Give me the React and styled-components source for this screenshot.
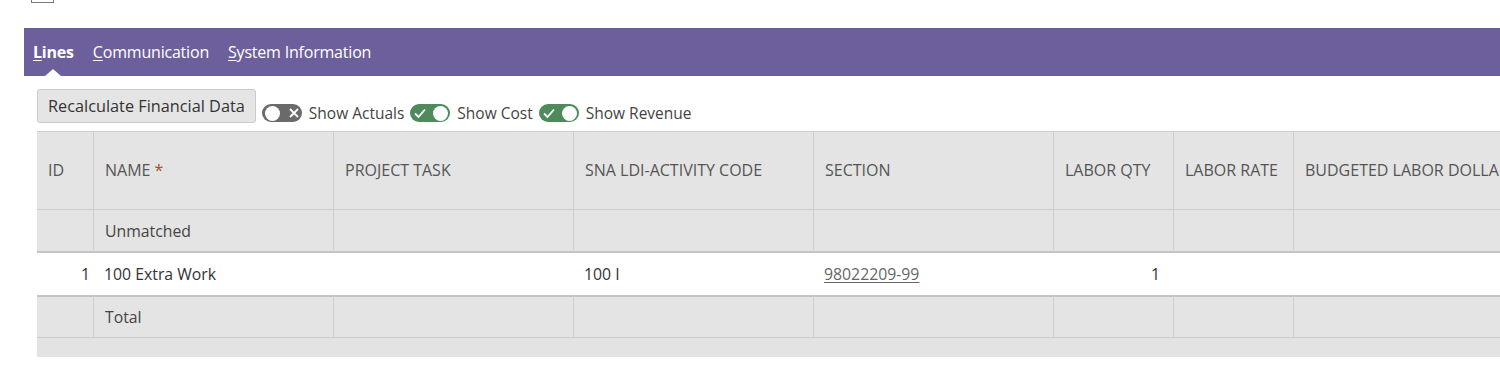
import React from 'react';
import styled, { createGlobalStyle } from 'styled-components';

const Global = createGlobalStyle`
  body {
    margin: 0;
    background: #fff;
    font-family: "Open Sans", "Liberation Sans", sans-serif;
    overflow: hidden;
  }
`;

const Page = styled.div`
  padding-left: 24px;
  width: 1500px;
  box-sizing: border-box;
  overflow: hidden;
`;

const TopCheck = styled.div`
  margin-left: 7px;
  width: 21px;
  height: 2px;
  border: 1px solid #7a7a7a;
  border-top: none;
`;

const TabBar = styled.div`
  margin-top: 25px;
  height: 48px;
  background: #6d5f9b;
  display: flex;
  align-items: center;
  gap: 19px;
  padding-left: 9px;
`;

const Tab = styled.div`
  position: relative;
  color: #fff;
  font-size: 16px;
  font-weight: ${p => (p.$active ? 700 : 400)};
  letter-spacing: -0.2px;
  height: 48px;
  line-height: 48px;

  u { text-decoration: underline; text-underline-offset: 2px; }

  ${p => p.$active && `
    &::after {
      content: '';
      position: absolute;
      left: 50%;
      bottom: 0;
      transform: translateX(-50%);
      border-left: 8px solid transparent;
      border-right: 8px solid transparent;
      border-bottom: 7px solid #fff;
    }
  `}
`;

const Body = styled.div`
  padding: 13px 0 0 13px;
`;

const Toolbar = styled.div`
  display: flex;
  align-items: flex-end;
  gap: 6px;
`;

const Button = styled.button`
  font-family: inherit;
  font-size: 16.3px;
  color: #333;
  background: #e5e5e5;
  border: 1px solid #cbcbcb;
  border-radius: 3px;
  height: 34px;
  padding: 0 10px;
`;

const ToggleItem = styled.label`
  display: flex;
  align-items: center;
  gap: 7px;
  font-size: 15.5px;
  color: #444;
  height: 20px;
`;

const Switch = styled.span`
  width: 40px;
  height: 18px;
  border-radius: 9px;
  background: ${p => (p.$on ? '#4e8a5c' : '#6a6a6a')};
  display: flex;
  align-items: center;
  justify-content: space-between;
  flex-direction: ${p => (p.$on ? 'row' : 'row-reverse')};
  padding: 0 2px 0 3px;
  box-sizing: border-box;
`;

const Knob = styled.span`
  width: 15px;
  height: 15px;
  border-radius: 50%;
  background: #fff;
`;

const Table = styled.div`
  margin-top: 8px;
  width: 1700px;
  display: grid;
  grid-template-columns: 56px 240px 240px 240px 240px 120px 120px 484px;
  font-size: 15.8px;
  color: #444;
`;

const HeadCell = styled.div`
  background: #e4e4e4;
  height: 79px;
  box-sizing: border-box;
  border-top: 1px solid #cdcdcd;
  border-left: ${p => (p.$first ? 'none' : '1px solid #cdcdcd')};
  border-bottom: 1px solid #cdcdcd;
  display: flex;
  align-items: center;
  padding: 0 0 2px 11px;
  color: #555;
  font-size: 16px;
  text-transform: uppercase;
  white-space: nowrap;

  b { color: #a0522d; font-weight: 400; margin-left: 4px; }
`;

const GrayCell = styled.div`
  background: #e4e4e4;
  height: 43px;
  box-sizing: border-box;
  border-left: ${p => (p.$first ? 'none' : '1px solid #cdcdcd')};
  border-top: ${p => (p.$thickTop ? '2px solid #c4c4c4' : 'none')};
  border-bottom: ${p => (p.$thick ? '2px solid #c4c4c4' : '1px solid #cdcdcd')};
  display: flex;
  align-items: center;
  padding-left: 11px;
  color: #444;
`;

const DataCell = styled.div`
  background: #fff;
  height: 42px;
  display: flex;
  align-items: center;
  justify-content: ${p => (p.$right ? 'flex-end' : 'flex-start')};
  padding-left: ${p => (p.$right ? 0 : 11)}px;
  padding-right: ${p => p.$pr || 0}px;
  color: #333;
`;

const SectionLink = styled.a`
  color: #666;
  text-decoration: underline;
  text-underline-offset: 2px;
`;

const ScrollStrip = styled.div`
  grid-column: 1 / -1;
  height: 19px;
  background: #e3e3e3;
`;

const columns = ['ID', 'Name', 'Project Task', 'SNA LDI-Activity Code', 'Section', 'Labor Qty', 'Labor Rate', 'Budgeted Labor Dollars'];

const Check = () => (
  <svg width="14" height="12" viewBox="0 0 14 12">
    <path d="M2 6.5 L5.5 10 L12 2.5" fill="none" stroke="#fff" strokeWidth="1.8" />
  </svg>
);

const Cross = () => (
  <svg width="12" height="12" viewBox="0 0 12 12">
    <path d="M2 2 L10 10 M10 2 L2 10" fill="none" stroke="#fff" strokeWidth="1.8" />
  </svg>
);

function Toggle({ on, label }) {
  return (
    <ToggleItem>
      <Switch $on={on}>
        {on ? <Check /> : <Cross />}
        <Knob />
      </Switch>
      {label}
    </ToggleItem>
  );
}

function GrayRow({ label, thick, thickTop }) {
  return columns.map((c, i) => (
    <GrayCell key={c} $first={i === 0} $thick={thick} $thickTop={thickTop}>
      {i === 1 ? label : ''}
    </GrayCell>
  ));
}

export default function App() {
  return (
    <Page>
      <Global />
      <TopCheck />
      <TabBar>
        <Tab $active><u>L</u>ines</Tab>
        <Tab><u>C</u>ommunication</Tab>
        <Tab><u>S</u>ystem Information</Tab>
      </TabBar>
      <Body>
        <Toolbar>
          <Button>Recalculate Financial Data</Button>
          <Toggle label="Show Actuals" />
          <Toggle on label="Show Cost" />
          <Toggle on label="Show Revenue" />
        </Toolbar>
        <Table>
          {columns.map((c, i) => (
            <HeadCell key={c} $first={i === 0}>
              {c}{c === 'Name' && <b>*</b>}
            </HeadCell>
          ))}
          <GrayRow label="Unmatched" thick />
          <DataCell $right $pr={3}>1</DataCell>
          <DataCell>100 Extra Work</DataCell>
          <DataCell />
          <DataCell>100 I</DataCell>
          <DataCell><SectionLink>98022209-99</SectionLink></DataCell>
          <DataCell $right $pr={13}>1</DataCell>
          <DataCell />
          <DataCell />
          <GrayRow label="Total" thickTop />
          <ScrollStrip />
        </Table>
      </Body>
    </Page>
  );
}
